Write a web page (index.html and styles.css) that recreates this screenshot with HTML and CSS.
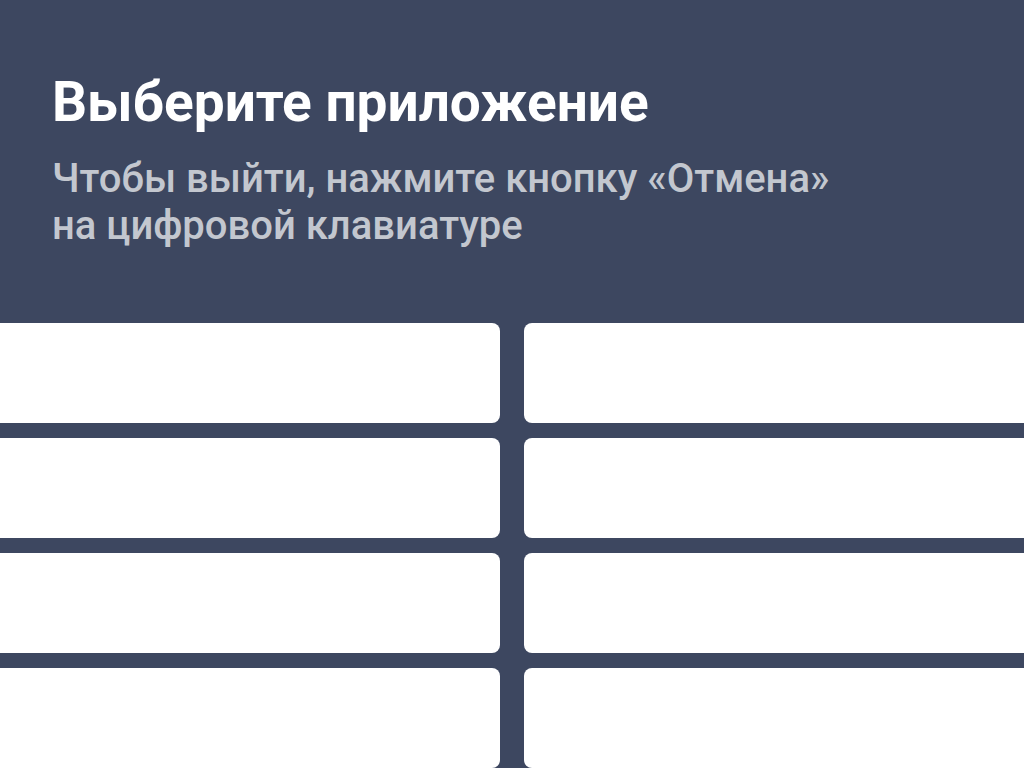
FILE: index.html
```html
<!DOCTYPE html>
<html lang="ru">
<head>
<meta charset="utf-8">
<title>Выберите приложение</title>
<link rel="stylesheet" href="styles.css">
</head>
<body>
<div class="screen">
  <header class="header">
    <h1 class="title">Выберите приложение</h1>
    <p class="subtitle">Чтобы выйти, нажмите кнопку «Отмена»<br>на цифровой клавиатуре</p>
  </header>
  <div class="grid">
    <div class="card"></div>
    <div class="card"></div>
    <div class="card"></div>
    <div class="card"></div>
    <div class="card"></div>
    <div class="card"></div>
    <div class="card"></div>
    <div class="card"></div>
  </div>
</div>
</body>
</html>
```

FILE: styles.css
```css
html, body {
  margin: 0;
  padding: 0;
  background: #3d4760;
}
.screen {
  width: 1024px;
  height: 768px;
  overflow: hidden;
  background: #3d4760;
  font-family: Roboto, "Noto Sans", sans-serif;
}
.header {
  padding: 70px 52px 0;
  height: 255px;
  box-sizing: border-box;
}
.title {
  margin: 0;
  font-size: 55px;
  line-height: 64px;
  font-weight: 700;
  color: #ffffff;
}
.subtitle {
  margin: 21px 0 0;
  font-size: 40px;
  line-height: 47px;
  font-weight: 500;
  color: #c3c7cf;
}
.grid {
  display: grid;
  grid-template-columns: 1fr 1fr;
  grid-auto-rows: 100px;
  column-gap: 24px;
  row-gap: 15px;
  margin: 68px -20px 0;
}
.card {
  background: #ffffff;
  border-radius: 8px;
}
```
